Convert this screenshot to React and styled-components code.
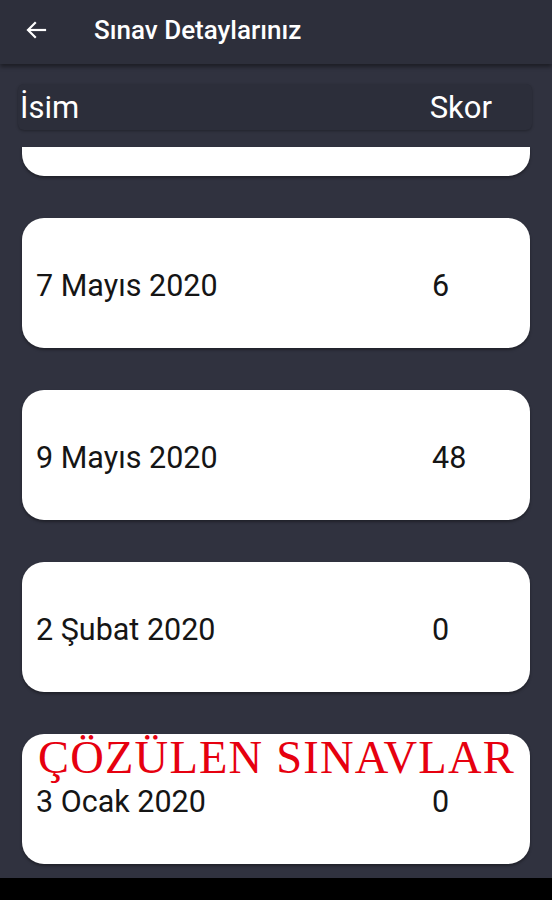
import React from "react";
import styled, { createGlobalStyle } from "styled-components";

const GlobalStyle = createGlobalStyle`
  html, body {
    margin: 0;
    padding: 0;
    background: #30323f;
    font-family: Roboto, "Noto Sans", sans-serif;
  }
`;

const Screen = styled.div`
  position: relative;
  width: 552px;
  height: 900px;
  display: flex;
  flex-direction: column;
  background: #30323f;
  overflow: hidden;
`;

const AppBar = styled.div`
  height: 64px;
  flex-shrink: 0;
  display: flex;
  align-items: center;
  background: #2d2f3b;
  box-shadow: 0 3px 4px rgba(0, 0, 0, 0.4);
  position: relative;
  z-index: 2;
`;

const BackButton = styled.div`
  width: 94px;
  display: flex;
  align-items: center;
  padding-left: 24px;
  padding-bottom: 4px;
  box-sizing: border-box;
  color: #fff;
`;

const Title = styled.div`
  color: #fff;
  font-size: 26px;
  font-weight: 500;
  padding-bottom: 4px;
`;

const Content = styled.div`
  flex: 1;
  display: flex;
  flex-direction: column;
  padding: 20px 0 0;
  min-height: 0;
`;

const HeaderRow = styled.div`
  margin: 0 20px 0 18px;
  height: 46px;
  display: flex;
  align-items: center;
  justify-content: space-between;
  padding: 0 40px 0 2px;
  background: #2c2e3a;
  border-radius: 6px;
  box-shadow: 0 1px 3px rgba(0, 0, 0, 0.3);
  color: #fff;
  font-size: 31px;
`;

const List = styled.div`
  flex: 1;
  overflow: hidden;
  display: flex;
  flex-direction: column;
  gap: 42px;
  padding-top: 17px;
`;

const Card = styled.div`
  flex-shrink: 0;
  margin: 0 22px;
  height: ${(p) => (p.partial ? "29px" : "130px")};
  background: #fff;
  border-radius: ${(p) => (p.partial ? "0 0 22px 22px" : "22px")};
  display: grid;
  grid-template-columns: 396px 1fr;
  align-items: center;
  padding: ${(p) => (p.partial ? "0 0 0 14px" : "4px 0 0 14px")};
  box-sizing: border-box;
  box-shadow: 0 2px 3px rgba(0, 0, 0, 0.35);
  color: #151515;
  font-size: 30.5px;
`;

const NavBar = styled.div`
  height: 22px;
  flex-shrink: 0;
  background: #000;
`;

const Overlay = styled.div`
  position: absolute;
  top: 731px;
  left: 38px;
  font-family: "Liberation Serif", "Times New Roman", serif;
  font-size: 46.5px;
  color: #e6000f;
  letter-spacing: 1.2px;
  white-space: nowrap;
  z-index: 3;
`;

const exams = [
  { date: "7 Mayıs 2020", score: 6 },
  { date: "9 Mayıs 2020", score: 48 },
  { date: "2 Şubat 2020", score: 0 },
  { date: "3 Ocak 2020", score: 0 },
];

export default function App() {
  return (
    <Screen>
      <GlobalStyle />
      <AppBar>
        <BackButton>
          <svg width="24" height="24" viewBox="0 0 24 24" fill="none" stroke="#fff" strokeWidth="2.2" strokeLinecap="square">
            <path d="M21 12H5" />
            <path d="M11 5l-7 7 7 7" />
          </svg>
        </BackButton>
        <Title>Sınav Detaylarınız</Title>
      </AppBar>
      <Content>
        <HeaderRow>
          <span>İsim</span>
          <span>Skor</span>
        </HeaderRow>
        <List>
          <Card partial />
          {exams.map((e, i) => (
            <Card key={i}>
              <span>{e.date}</span>
              <span>{e.score}</span>
            </Card>
          ))}
        </List>
      </Content>
      <NavBar />
      <Overlay>ÇÖZÜLEN SINAVLAR</Overlay>
    </Screen>
  );
}
